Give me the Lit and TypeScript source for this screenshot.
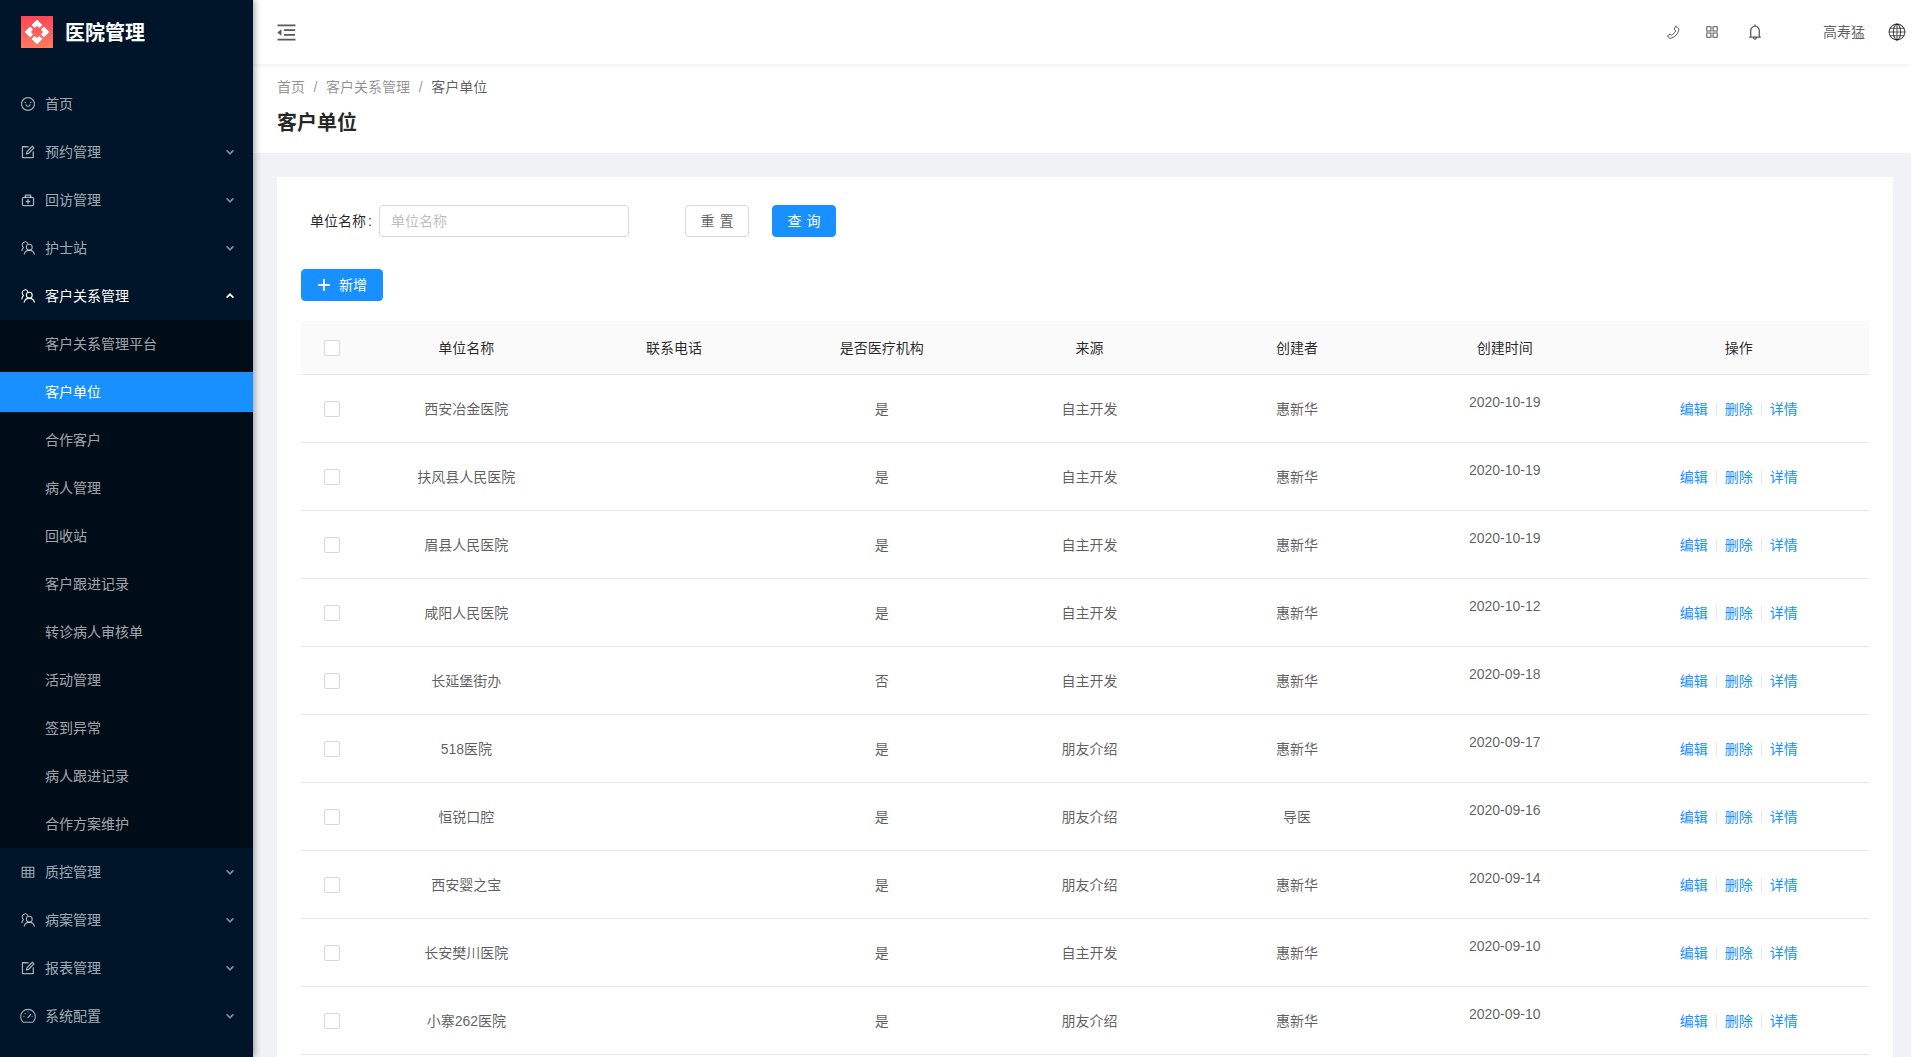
import { LitElement, html, css, svg } from "lit";
import { customElement } from "lit/decorators.js";

const fill = (d: string, size = 14) =>
  html`<svg width=${size} height=${size} viewBox="0 0 1024 1024" fill="currentColor">${svg`<path d=${d}></path>`}</svg>`;

const SMILE = "M288 421a48 48 0 1 0 96 0 48 48 0 1 0-96 0zm352 0a48 48 0 1 0 96 0 48 48 0 1 0-96 0zM512 64C264.6 64 64 264.6 64 512s200.6 448 448 448 448-200.6 448-448S759.4 64 512 64zm263 711c-34.2 34.2-74 61-118.3 79.8C611 874.2 562.3 884 512 884c-50.3 0-99-9.8-144.8-29.2A370.4 370.4 0 0 1 248.9 775c-34.2-34.2-61-74-79.8-118.3C149.8 611 140 562.3 140 512s9.8-99 29.2-144.8A370.4 370.4 0 0 1 249 248.9c34.2-34.2 74-61 118.3-79.8C413 149.8 461.7 140 512 140c50.3 0 99 9.8 144.8 29.2A370.4 370.4 0 0 1 775.1 249c34.2 34.2 61 74 79.8 118.3C874.2 413 884 461.7 884 512s-9.8 99-29.2 144.8A368.89 368.89 0 0 1 775 775zM664 533h-48.1c-4.2 0-7.8 3.2-8.1 7.4C604 589.9 562.5 629 512 629s-92.1-39.1-95.8-88.6c-.3-4.2-3.9-7.4-8.1-7.4H360a8 8 0 0 0-8 8.4c4.4 84.3 74.5 151.6 160 151.6s155.6-67.3 160-151.6a8 8 0 0 0-8-8.4z";
const OUTDENT = "M408 442h480c4.4 0 8-3.6 8-8v-56c0-4.4-3.6-8-8-8H408c-4.4 0-8 3.6-8 8v56c0 4.4 3.6 8 8 8zm-8 204c0 4.4 3.6 8 8 8h480c4.4 0 8-3.6 8-8v-56c0-4.4-3.6-8-8-8H408c-4.4 0-8 3.6-8 8v56zm504-486H120c-4.4 0-8 3.6-8 8v56c0 4.4 3.6 8 8 8h784c4.4 0 8-3.6 8-8v-56c0-4.4-3.6-8-8-8zm0 632H120c-4.4 0-8 3.6-8 8v56c0 4.4 3.6 8 8 8h784c4.4 0 8-3.6 8-8v-56c0-4.4-3.6-8-8-8zM115.4 518.9L271.7 642c5.8 4.6 14.4.5 14.4-6.9V388.9c0-7.4-8.5-11.5-14.4-6.9L115.4 505.1a8.74 8.74 0 0 0 0 13.8z";
const BELL = "M816 768h-24V428c0-141.1-104.3-257.7-240-277.1V112c0-22.1-17.9-40-40-40s-40 17.9-40 40v38.9c-135.7 19.4-240 136-240 277.1v340h-24c-17.7 0-32 14.3-32 32v32c0 4.4 3.6 8 8 8h216c0 61.8 50.2 112 112 112s112-50.2 112-112h216c4.4 0 8-3.6 8-8v-32c0-17.7-14.3-32-32-32zM512 888c-26.5 0-48-21.5-48-48h96c0 26.5-21.5 48-48 48zM304 768V428c0-55.6 21.6-107.8 60.9-147.1S456.4 220 512 220c55.6 0 107.8 21.6 147.1 60.9S720 372.4 720 428v340H304z";
const APPSTORE = "M464 144H160c-8.8 0-16 7.2-16 16v304c0 8.8 7.2 16 16 16h304c8.8 0 16-7.2 16-16V160c0-8.8-7.2-16-16-16zm-52 268H212V212h200v200zm452-268H560c-8.8 0-16 7.2-16 16v304c0 8.8 7.2 16 16 16h304c8.8 0 16-7.2 16-16V160c0-8.8-7.2-16-16-16zm-52 268H612V212h200v200zM464 544H160c-8.8 0-16 7.2-16 16v304c0 8.8 7.2 16 16 16h304c8.8 0 16-7.2 16-16V560c0-8.8-7.2-16-16-16zm-52 268H212V612h200v200zm452-268H560c-8.8 0-16 7.2-16 16v304c0 8.8 7.2 16 16 16h304c8.8 0 16-7.2 16-16V560c0-8.8-7.2-16-16-16zm-52 268H612V612h200v200z";

const stroke = (body: unknown, size = 14, w = 1.7) =>
  html`<svg width=${size} height=${size} viewBox="0 0 24 24" fill="none" stroke="currentColor" stroke-width=${w} stroke-linecap="round" stroke-linejoin="round">${body}</svg>`;

const ICONS: Record<string, () => unknown> = {
  smile: () => fill(SMILE, 16),
  form: () => stroke(svg`<path d="M21 12v9.500H2.500V3H12"></path><path d="M9.500 15l.8-3.600L19.500 2.200l2.800 2.800-9.200 9.200z"></path>`, 14, 2.2),
  medicine: () => stroke(svg`<path d="M7.500 7.500V3.500h9v4"></path><path d="M5 7.500h14a2.500 2.500 0 0 1 2.500 2.500v9.500a2 2 0 0 1-2 2h-15a2 2 0 0 1-2-2V10A2.500 2.500 0 0 1 5 7.500z"></path><path d="M12 11.500v6M9 14.500h6" stroke-width="2.400"></path>`, 14, 2.2),
  team: () => stroke(svg`<circle cx="14.200" cy="10.500" r="5"></circle><path d="M5.500 22.500c.8-4 4.200-6.500 8.700-6.500s7.900 2.500 8.700 6.500"></path><path d="M11.500 4.300A5 5 0 0 0 2 6.800c0 1.700.9 3.200 2.200 4.100C2.800 12.300 1.800 14.300 1.500 17"></path>`, 14, 1.9),
  table: () => stroke(svg`<path d="M2 4h20v17H2zM2 9.500h20M2 15h20M8.700 4v17M15.300 4v17"></path>`, 14, 1.8),
  dashboard: () => stroke(svg`<path d="M5 21.500A11 11 0 1 1 19 21.500z"></path><path d="M12 14.500l4-5M5.500 12.500h.5M18 12.500h.5M12 5.500v.5M7.500 8l.4.4"></path>`, 16, 1.6),
  phone: () => stroke(svg`<path d="M15.800 2.500l3.500 2.300c1.200.9 1.500 2 1.200 3.400-1.300 6-6.700 11.800-13 13-1.300.3-2.500-.1-3.300-1.200L2.500 17.200l4.400-2.700 1.700 1.900c2.800-1.300 5.700-4.300 7-7.200l-2-1.700z"></path>`, 15, 1.6),
  globe: () => stroke(svg`<circle cx="12" cy="12" r="10.500"></circle><ellipse cx="12" cy="12" rx="4.800" ry="10.500"></ellipse><path d="M12 1.500v21M1.500 12h21M3 7h18M3 17h18"></path>`, 18, 1.5),
};

const chevron = (up = false) =>
  html`<svg class="chev" width="8" height="6" viewBox="0 0 8 6" fill="none" stroke="currentColor" stroke-width="1.700">${svg`<path d=${up ? "M.6 4.700L4 1.300l3.400 3.400" : "M.6 1.300L4 4.700l3.400-3.400"}></path>`}</svg>`;

const TOP = [
  { icon: "smile", label: "首页", arrow: false },
  { icon: "form", label: "预约管理", arrow: true },
  { icon: "medicine", label: "回访管理", arrow: true },
  { icon: "team", label: "护士站", arrow: true },
];
const SUB = ["客户关系管理平台", "客户单位", "合作客户", "病人管理", "回收站", "客户跟进记录", "转诊病人审核单", "活动管理", "签到异常", "病人跟进记录", "合作方案维护"];
const BOTTOM = [
  { icon: "table", label: "质控管理", arrow: true },
  { icon: "team", label: "病案管理", arrow: true },
  { icon: "form", label: "报表管理", arrow: true },
  { icon: "dashboard", label: "系统配置", arrow: true },
];
const ROWS = [
  ["西安冶金医院", "是", "自主开发", "惠新华", "2020-10-19"],
  ["扶风县人民医院", "是", "自主开发", "惠新华", "2020-10-19"],
  ["眉县人民医院", "是", "自主开发", "惠新华", "2020-10-19"],
  ["咸阳人民医院", "是", "自主开发", "惠新华", "2020-10-12"],
  ["长延堡街办", "否", "自主开发", "惠新华", "2020-09-18"],
  ["518医院", "是", "朋友介绍", "惠新华", "2020-09-17"],
  ["恒锐口腔", "是", "朋友介绍", "导医", "2020-09-16"],
  ["西安婴之宝", "是", "朋友介绍", "惠新华", "2020-09-14"],
  ["长安樊川医院", "是", "自主开发", "惠新华", "2020-09-10"],
  ["小寨262医院", "是", "朋友介绍", "惠新华", "2020-09-10"],
];

@customElement("app-root")
export class AppRoot extends LitElement {
  static styles = css`
    :host {
      display: block;
      height: 100vh;
      overflow: hidden;
      background: #f0f2f5;
      font-family: "Liberation Sans", "Noto Sans CJK SC", sans-serif;
      font-size: 14px;
      line-height: 22px;
      color: rgba(0, 0, 0, 0.65);
    }
    .layout { display: flex; height: 100%; }
    .side {
      flex: 0 0 253px;
      background: #001529;
      box-shadow: 2px 0 6px rgba(0, 21, 41, 0.35);
      position: relative;
      z-index: 2;
      color: rgba(255, 255, 255, 0.65);
    }
    .logo { height: 64px; display: flex; align-items: center; padding-left: 21px; gap: 12px; }
    .logo svg { display: block; }
    .logo span { font-size: 20px; font-weight: 600; color: #fff; line-height: 28px; padding-top: 2px; }
    .menu { padding-top: 16px; }
    .item { height: 48px; padding: 4px 0; box-sizing: border-box; }
    .row {
      height: 40px;
      display: flex;
      align-items: center;
      padding: 0 19px 0 21px;
    }
    .ico { width: 24px; display: flex; align-items: center; flex: none; }
    .ico svg { display: block; }
    .ico svg[width="16"] { margin-left: -1px; }
    .row .txt { flex: 1; }
    .chev { display: block; opacity: 0.75; }
    .open { color: #fff; }
    .open .chev { opacity: 1; }
    .sub { background: #000c17; }
    .sub .row { padding-left: 45px; }
    .sub .sel .row { background: #1890ff; color: #fff; }

    .main { flex: 1; min-width: 0; display: flex; flex-direction: column; }
    .header {
      flex: none;
      height: 64px;
      background: #fff;
      box-shadow: 0 1px 4px rgba(0, 21, 41, 0.08);
      position: relative;
      z-index: 1;
      display: flex;
      align-items: center;
      padding: 0 5px 0 22px;
      color: rgba(0, 0, 0, 0.65);
    }
    .header svg { display: block; }
    .spacer { flex: 1; }
    .h-phone { margin-right: 23px; }
    .h-app { margin-right: 26px; }
    .h-bell { margin-right: 59px; }
    .h-name { margin-right: 23px; }
    .page-head { flex: none; height: 89px; box-sizing: border-box; background: #fff; padding: 12px 24px 0; }
    .crumb { display: flex; color: rgba(0, 0, 0, 0.45); height: 22px; }
    .crumb i { font-style: normal; margin: 0 8.600px; }
    .crumb b { font-weight: 400; color: rgba(0, 0, 0, 0.65); }
    .title { margin-top: 9px; font-size: 20px; line-height: 32px; font-weight: 600; color: rgba(0, 0, 0, 0.85); }
    .content { padding: 24px 18px 0 24px; }
    .card { background: #fff; padding: 28px 24px 24px; }
    .search { display: flex; align-items: center; height: 32px; padding-left: 9px; }
    .search label { color: rgba(0, 0, 0, 0.85); width: 69px; white-space: nowrap; }
    .search label span { margin-left: 2px; }
    .input {
      width: 250px;
      height: 32px;
      box-sizing: border-box;
      border: 1px solid #d9d9d9;
      border-radius: 4px;
      padding: 0 11px;
      font: inherit;
      outline: none;
    }
    .input::placeholder { color: #bfbfbf; opacity: 1; }
    .btn {
      height: 32px;
      width: 64px;
      box-sizing: border-box;
      border: 1px solid #d9d9d9;
      border-radius: 4px;
      background: #fff;
      color: rgba(0, 0, 0, 0.65);
      font: inherit;
      word-spacing: 1px;
      padding: 0;
      display: flex;
      align-items: center;
      justify-content: center;
    }
    .btn.pri { background: #1890ff; border-color: #1890ff; color: #fff; }
    .reset { margin-left: 56px; }
    .query { margin-left: 23px; }
    .add { width: 82px; margin-top: 32px; gap: 8px; }
    .add svg { display: block; }
    .tablewrap { margin-top: 20px; }
    table { width: 100%; border-collapse: separate; border-spacing: 0; table-layout: fixed; }
    col.c0 { width: 61.5px; }
    col.cn { width: 207.7px; }
    th, td { text-align: center; padding: 0; border-bottom: 1px solid #e8e8e8; box-sizing: border-box; }
    th { height: 54px; background: #fafafa; color: rgba(0, 0, 0, 0.85); font-weight: 400; }
    th:first-child { border-top-left-radius: 4px; }
    th:last-child { border-top-right-radius: 4px; }
    td { height: 68px; }
    .check {
      display: block;
      width: 16px;
      height: 16px;
      box-sizing: border-box;
      border: 1px solid #d9d9d9;
      border-radius: 2px;
      margin: 0 0 0 23px;
      background: #fff;
    }
    .date { display: block; padding-bottom: 14px; }
    .ops { display: flex; justify-content: center; align-items: center; color: #1890ff; }
    .ops i { width: 1px; height: 14px; margin: 0 8px; background: #e8e8e8; }
  `;

  private entry(m: { icon: string; label: string; arrow: boolean }) {
    return html`<div class="item"><div class="row">
      <span class="ico">${ICONS[m.icon]()}</span>
      <span class="txt">${m.label}</span>
      ${m.arrow ? chevron() : ""}
    </div></div>`;
  }

  render() {
    const petal = "M16 4l5 5-2.400 2.600-2.600-2.100-2.600 2.100-2.400-2.600z";
    return html`<div class="layout">
      <aside class="side">
        <div class="logo">
          <svg width="32" height="32" viewBox="0 0 32 32">
            <defs>
              <linearGradient id="lg" x1="0" y1="0" x2="0" y2="1">
                <stop offset="0" stop-color="#ff4458"></stop>
                <stop offset="1" stop-color="#ff7a5e"></stop>
              </linearGradient>
            </defs>
            <rect width="32" height="32" fill="url(#lg)"></rect>
            <g fill="#fff" stroke="#fff" stroke-width="1" stroke-linejoin="round">
              <path d=${petal}></path>
              <path d=${petal} transform="rotate(90 16 16)"></path>
              <path d=${petal} transform="rotate(180 16 16)"></path>
              <path d=${petal} transform="rotate(270 16 16)"></path>
            </g>
          </svg>
          <span>医院管理</span>
        </div>
        <nav class="menu">
          ${TOP.map((m) => this.entry(m))}
          <div class="item open"><div class="row">
            <span class="ico">${ICONS.team()}</span>
            <span class="txt">客户关系管理</span>
            ${chevron(true)}
          </div></div>
          <div class="sub">
            ${SUB.map((s) => html`<div class="item ${s === "客户单位" ? "sel" : ""}"><div class="row">${s}</div></div>`)}
          </div>
          ${BOTTOM.map((m) => this.entry(m))}
        </nav>
      </aside>
      <div class="main">
        <header class="header">
          ${fill(OUTDENT, 23)}
          <span class="spacer"></span>
          <span class="h-phone">${ICONS.phone()}</span>
          <span class="h-app">${fill(APPSTORE, 16)}</span>
          <span class="h-bell">${fill(BELL, 18)}</span>
          <span class="h-name">高寿猛</span>
          ${ICONS.globe()}
        </header>
        <div class="page-head">
          <div class="crumb"><span>首页</span><i>/</i><span>客户关系管理</span><i>/</i><b>客户单位</b></div>
          <div class="title">客户单位</div>
        </div>
        <div class="content">
          <section class="card">
            <div class="search">
              <label>单位名称<span>:</span></label>
              <input class="input" placeholder="单位名称" />
              <button class="btn reset">重 置</button>
              <button class="btn pri query">查 询</button>
            </div>
            <button class="btn pri add">
              <svg width="14" height="14" viewBox="0 0 14 14" fill="currentColor"><rect x="6" y="1" width="1.800" height="12"></rect><rect x="1" y="6" width="12" height="1.800"></rect></svg>
              <span>新增</span>
            </button>
            <div class="tablewrap">
              <table>
                <colgroup>
                  <col class="c0" /><col class="cn" /><col class="cn" /><col class="cn" /><col class="cn" /><col class="cn" /><col class="cn" /><col />
                </colgroup>
                <thead>
                  <tr>
                    <th><span class="check"></span></th>
                    <th>单位名称</th><th>联系电话</th><th>是否医疗机构</th><th>来源</th><th>创建者</th><th>创建时间</th><th>操作</th>
                  </tr>
                </thead>
                <tbody>
                  ${ROWS.map((r) => html`<tr>
                    <td><span class="check"></span></td>
                    <td>${r[0]}</td><td></td><td>${r[1]}</td><td>${r[2]}</td><td>${r[3]}</td>
                    <td><span class="date">${r[4]}</span></td>
                    <td><div class="ops"><span>编辑</span><i></i><span>删除</span><i></i><span>详情</span></div></td>
                  </tr>`)}
                </tbody>
              </table>
            </div>
          </section>
        </div>
      </div>
    </div>`;
  }
}
